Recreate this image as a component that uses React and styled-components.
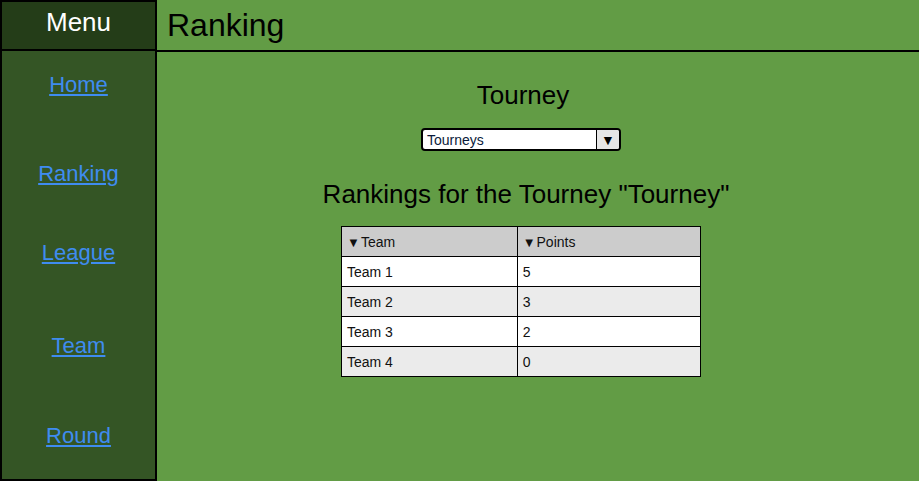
import styled, { createGlobalStyle } from "styled-components";

const GlobalStyle = createGlobalStyle`
  html, body {
    margin: 0;
    padding: 0;
    height: 100%;
  }
  body {
    font-family: "Liberation Sans", Arial, sans-serif;
    background: #629c45;
    overflow: hidden;
  }
`;

const Page = styled.div`
  display: flex;
  width: 919px;
  height: 481px;
  background: #629c45;
`;

// Sidebar
const Sidebar = styled.nav`
  width: 157px;
  height: 481px;
  box-sizing: border-box;
  border: 2px solid #000;
  background: #345525;
  display: flex;
  flex-direction: column;
`;

const MenuHead = styled.div`
  height: 49px;
  box-sizing: border-box;
  border-bottom: 2px solid #000;
  background: #243d18;
  color: #fff;
  font-size: 26px;
  display: flex;
  justify-content: center;
  align-items: center;
  padding-bottom: 6px;
`;

const NavLink = styled.a`
  display: block;
  text-align: center;
  margin-top: ${(props) => props.$top}px;
  font-size: 22px;
  line-height: 25px;
  color: #3f8cf0;
  text-decoration: underline;
`;

// Main
const Main = styled.main`
  flex: 1;
  display: flex;
  flex-direction: column;
`;

const TopBar = styled.header`
  height: 52px;
  box-sizing: border-box;
  border-bottom: 2px solid #000;
  padding: 7px 0 0 10px;
`;

const Title = styled.h1`
  margin: 0;
  font-size: 32px;
  font-weight: normal;
  color: #000;
`;

const Content = styled.section`
  display: flex;
  flex-direction: column;
  align-items: center;
  padding-right: 34px;
  padding-top: 28px;
`;

const SubTitle = styled.h2`
  margin: 0;
  font-size: 26px;
  font-weight: normal;
  line-height: 30px;
  padding-left: 4px;
`;

const SelectBox = styled.div`
  margin-top: 18px;
  width: 200px;
  height: 23px;
  box-sizing: border-box;
  border: 2px solid #000;
  border-radius: 4px;
  background: #fff;
  display: flex;
  align-items: center;
  font-size: 14px;
  overflow: hidden;
`;

const SelectText = styled.span`
  flex: 1;
  padding-left: 4px;
  color: #0a1a3a;
`;

const SelectArrow = styled.span`
  width: 22px;
  height: 100%;
  background: #e6e6e6;
  border-left: 1px solid #000;
  display: flex;
  align-items: center;
  justify-content: center;
  font-size: 14px;
  color: #000;
`;

const Heading = styled.h2`
  margin: 28px 0 0;
  font-size: 26px;
  font-weight: normal;
  line-height: 30px;
  padding-left: 10px;
`;

const Table = styled.table`
  margin-top: 17px;
  border-collapse: collapse;
  font-size: 14px;
  width: 360px;
`;

const Th = styled.th`
  background: #cccccc;
  border: 1px solid #000;
  height: 29px;
  padding: 0 5px;
  text-align: left;
  font-weight: normal;
  color: #111;
  width: ${(props) => props.$w}px;
`;

const Row = styled.tr`
  background: ${(props) => (props.$alt ? "#ebebeb" : "#fff")};
`;

const Td = styled.td`
  border: 1px solid #000;
  height: 29px;
  padding: 0 5px;
  color: #111;
`;

const Caret = styled.span`
  font-size: 13px;
  line-height: 14px;
  margin-right: 1px;
`;

const links = [
  { label: "Home", top: 21 },
  { label: "Ranking", top: 64 },
  { label: "League", top: 54 },
  { label: "Team", top: 68 },
  { label: "Round", top: 65 },
];

const teams = [
  ["Team 1", 5],
  ["Team 2", 3],
  ["Team 3", 2],
  ["Team 4", 0],
];

export default function App() {
  return (
    <Page>
      <GlobalStyle />
      <Sidebar>
        <MenuHead>Menu</MenuHead>
        {links.map((l) => (
          <NavLink key={l.label} href="#" $top={l.top}>
            {l.label}
          </NavLink>
        ))}
      </Sidebar>
      <Main>
        <TopBar>
          <Title>Ranking</Title>
        </TopBar>
        <Content>
          <SubTitle>Tourney</SubTitle>
          <SelectBox>
            <SelectText>Tourneys</SelectText>
            <SelectArrow>▼</SelectArrow>
          </SelectBox>
          <Heading>Rankings for the Tourney "Tourney"</Heading>
          <Table>
            <thead>
              <tr>
                <Th $w={176}>
                  <Caret>▼</Caret>Team
                </Th>
                <Th $w={184}>
                  <Caret>▼</Caret>Points
                </Th>
              </tr>
            </thead>
            <tbody>
              {teams.map(([name, pts], i) => (
                <Row key={name} $alt={i % 2 === 1}>
                  <Td>{name}</Td>
                  <Td>{pts}</Td>
                </Row>
              ))}
            </tbody>
          </Table>
        </Content>
      </Main>
    </Page>
  );
}
